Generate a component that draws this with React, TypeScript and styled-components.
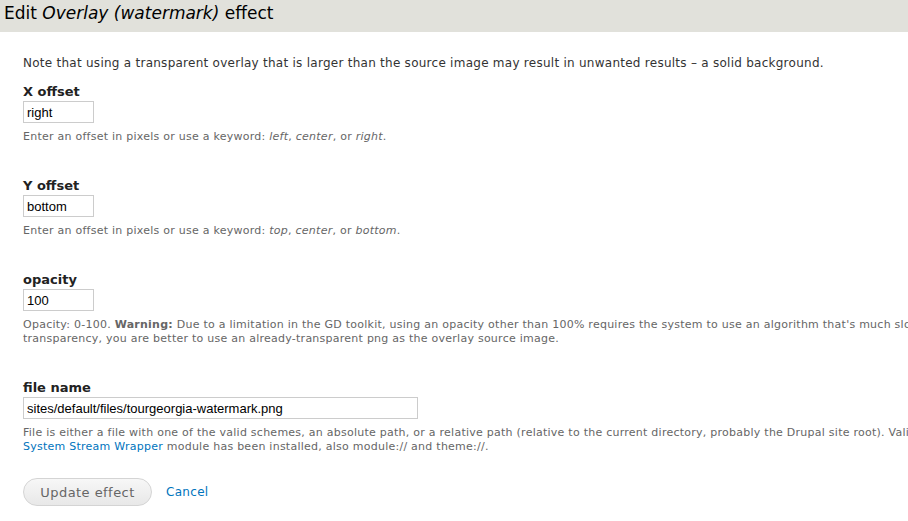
import styled, { createGlobalStyle } from 'styled-components';

const GlobalStyle = createGlobalStyle`
  body {
    margin: 0;
    background: #fff;
    font-family: "DejaVu Sans", Verdana, sans-serif;
    color: #333;
  }
`;

const Page = styled.div`
  width: 908px;
  height: 521px;
  overflow: hidden;
`;

const Header = styled.div`
  background: #e1e1db;
  height: 32px;
  box-sizing: border-box;
  padding: 2px 0 0 4px;
`;

const Title = styled.h1`
  margin: 0;
  font-size: 17px;
  line-height: 22px;
  font-weight: normal;
  color: #000;
  white-space: nowrap;
`;

const Content = styled.div`
  padding: 24px 0 0 23px;
  white-space: nowrap;
`;

const Note = styled.p`
  margin: 0 0 14px;
  font-size: 12px;
  letter-spacing: 0.26px;
  color: #333;
`;

const Field = styled.div<{ $gap?: number }>`
  margin-bottom: ${(p) => p.$gap ?? 34}px;
`;

const Label = styled.label`
  display: block;
  font-weight: bold;
  font-size: 13px;
  line-height: 15px;
  color: #222;
  margin-bottom: 2px;
`;

const TextInput = styled.input<{ $wide?: boolean }>`
  display: block;
  box-sizing: border-box;
  width: ${(p) => (p.$wide ? '395px' : '71px')};
  height: 22px;
  padding: 1px 3px;
  border: 1px solid #ccc;
  font-family: "Liberation Sans", Arial, sans-serif;
  font-size: 13px;
  color: #000;
  margin: 0;
`;

const Description = styled.div`
  margin-top: 7px;
  font-size: 11px;
  letter-spacing: 0.25px;
  line-height: 14px;
  color: #666;
`;

const Link = styled.a`
  color: #0074bd;
  text-decoration: none;
`;

const Actions = styled.div`
  display: flex;
  align-items: center;
  gap: 14px;
`;

const Button = styled.button`
  box-sizing: border-box;
  height: 28px;
  width: 129px;
  border: 1px solid #d4d4d4;
  border-radius: 14px;
  background: linear-gradient(#f7f7f7, #e8e8e8);
  color: #666;
  font-family: "DejaVu Sans", Verdana, sans-serif;
  font-size: 13px;
  letter-spacing: 0.45px;
`;

const Cancel = styled(Link)`
  font-size: 12px;
  letter-spacing: 0.3px;
`;

export default function App() {
  return (
    <Page>
      <GlobalStyle />
      <Header>
        <Title>
          Edit <em>Overlay (watermark)</em> effect
        </Title>
      </Header>
      <Content>
        <Note>
          Note that using a transparent overlay that is larger than the source image may result in unwanted results – a solid background.
        </Note>
        <Field>
          <Label>X offset</Label>
          <TextInput defaultValue="right" />
          <Description>
            Enter an offset in pixels or use a keyword: <em>left</em>, <em>center</em>, or <em>right</em>.
          </Description>
        </Field>
        <Field>
          <Label>Y offset</Label>
          <TextInput defaultValue="bottom" />
          <Description>
            Enter an offset in pixels or use a keyword: <em>top</em>, <em>center</em>, or <em>bottom</em>.
          </Description>
        </Field>
        <Field>
          <Label>opacity</Label>
          <TextInput defaultValue="100" />
          <Description>
            Opacity: 0-100. <strong>Warning:</strong> Due to a limitation in the GD toolkit, using an opacity other than 100% requires the system to use an algorithm that's much slower than the built-in functions directly. If you want partial
            <br />
            transparency, you are better to use an already-transparent png as the overlay source image.
          </Description>
        </Field>
        <Field $gap={24}>
          <Label>file name</Label>
          <TextInput $wide defaultValue="sites/default/files/tourgeorgia-watermark.png" />
          <Description>
            File is either a file with one of the valid schemes, an absolute path, or a relative path (relative to the current directory, probably the Drupal site root). Valid schemes are restricted to those where the
            <br />
            <Link href="#">System Stream Wrapper</Link> module has been installed, also module:// and theme://.
          </Description>
        </Field>
        <Actions>
          <Button>Update effect</Button>
          <Cancel href="#">Cancel</Cancel>
        </Actions>
      </Content>
    </Page>
  );
}
